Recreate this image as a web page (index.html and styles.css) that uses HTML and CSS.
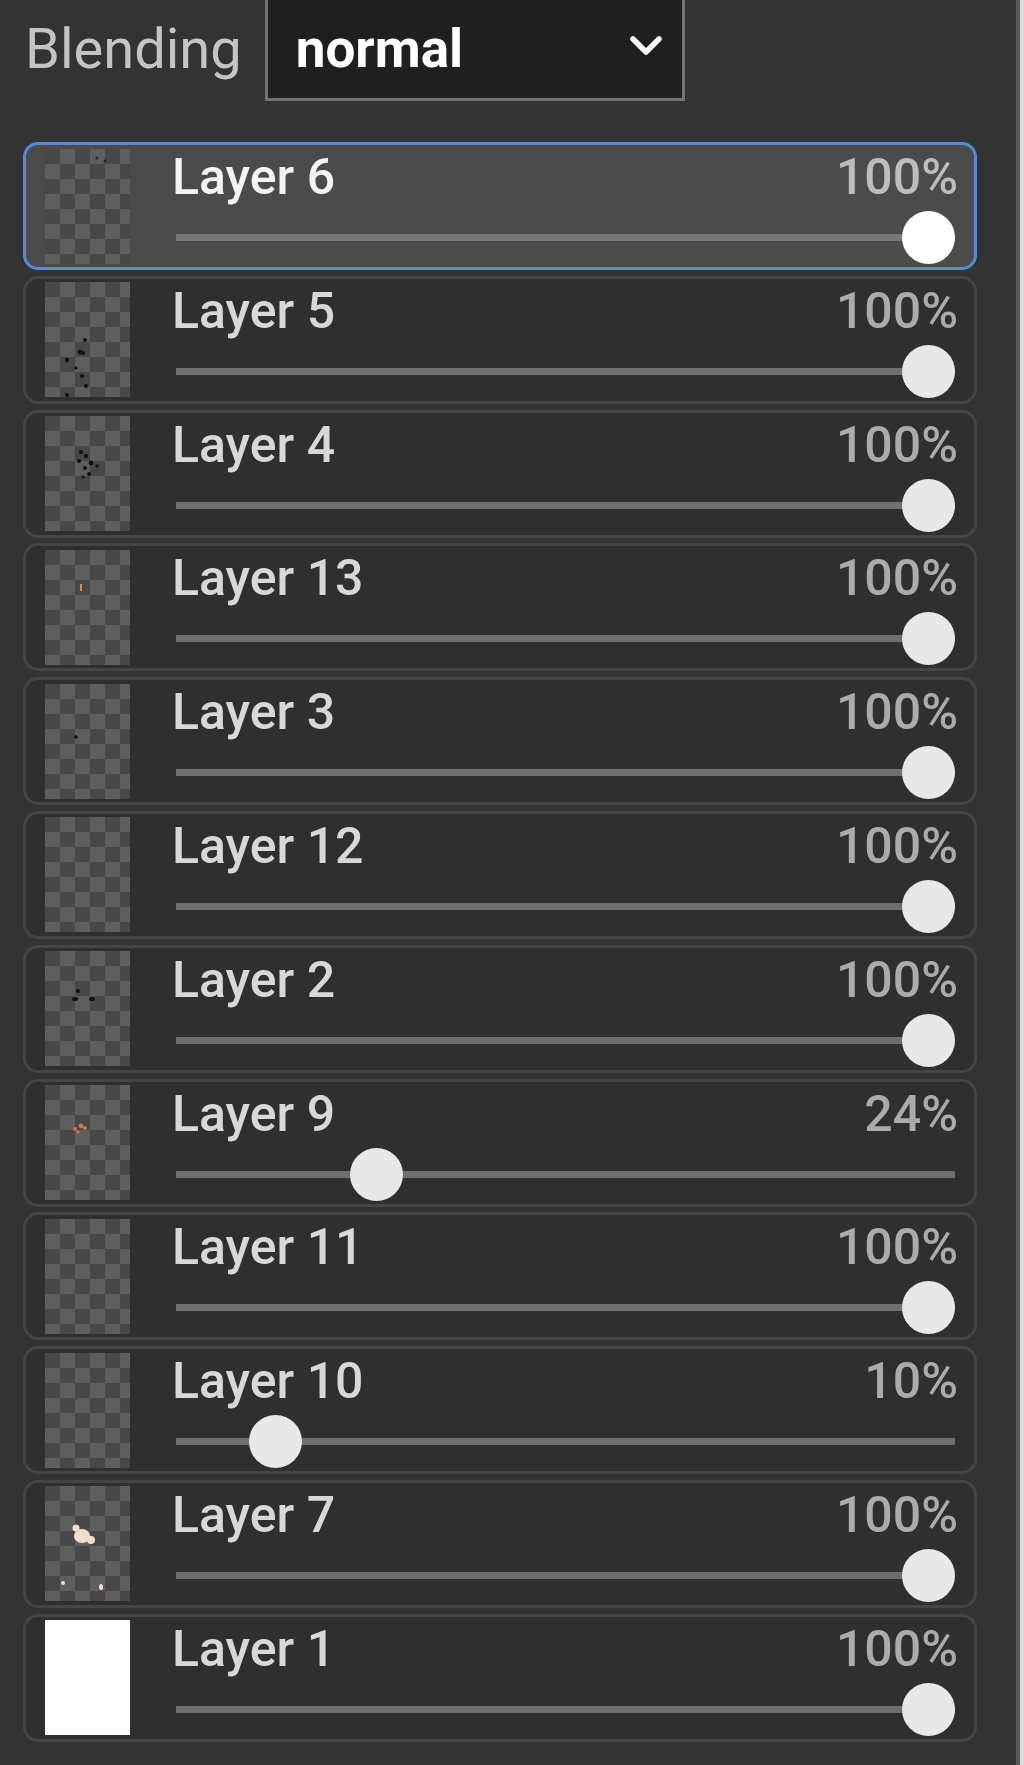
FILE: index.html
```html
<!DOCTYPE html>
<html>
<head>
<meta charset="utf-8">
<link rel="stylesheet" href="styles.css">
</head>
<body>
<div class="panel">
  <div class="header">
    <span class="label">Blending</span>
    <div class="select">
      <span class="select-value">normal</span>
      <svg class="chevron" width="36" height="24" viewBox="0 0 36 24"><polyline points="5,5 18,18 31,5" fill="none" stroke="#fff" stroke-width="5.5" stroke-linecap="round" stroke-linejoin="round"/></svg>
    </div>
  </div>
  <div class="layers">
    <div class="row row--active">
      <div class="thumb"><svg width="85" height="115" viewBox="0 0 85 115"><circle cx="52" cy="9" r="1.6" fill="#222"/><circle cx="60" cy="12" r="1.4" fill="#222"/></svg></div>
      <div class="info"><div class="line"><span class="name">Layer 6</span><span class="pct">100%</span></div><input class="slider" type="range" min="0" max="100" value="100"></div>
    </div>
    <div class="row">
      <div class="thumb"><svg width="85" height="115" viewBox="0 0 85 115"><g fill="#111"><circle cx="40" cy="58" r="2"/><circle cx="35" cy="70" r="2.4"/><circle cx="38" cy="71" r="2"/><circle cx="22" cy="78" r="2.2"/><circle cx="37" cy="94" r="2"/><circle cx="41" cy="104" r="2"/><circle cx="22" cy="113" r="2"/><circle cx="31" cy="86" r="1.4"/></g></svg></div>
      <div class="info"><div class="line"><span class="name">Layer 5</span><span class="pct">100%</span></div><input class="slider" type="range" min="0" max="100" value="100"></div>
    </div>
    <div class="row">
      <div class="thumb"><svg width="85" height="115" viewBox="0 0 85 115"><g fill="#111"><circle cx="36" cy="36" r="2"/><circle cx="41" cy="40" r="2.2"/><circle cx="34" cy="45" r="2"/><circle cx="46" cy="47" r="2.4"/><circle cx="40" cy="52" r="2"/><circle cx="52" cy="50" r="1.8"/><circle cx="44" cy="58" r="2"/><circle cx="38" cy="61" r="1.6"/></g></svg></div>
      <div class="info"><div class="line"><span class="name">Layer 4</span><span class="pct">100%</span></div><input class="slider" type="range" min="0" max="100" value="100"></div>
    </div>
    <div class="row">
      <div class="thumb"><svg width="85" height="115" viewBox="0 0 85 115"><rect x="35" y="34" width="2" height="7" fill="#d98a55"/></svg></div>
      <div class="info"><div class="line"><span class="name">Layer 13</span><span class="pct">100%</span></div><input class="slider" type="range" min="0" max="100" value="100"></div>
    </div>
    <div class="row">
      <div class="thumb"><svg width="85" height="115" viewBox="0 0 85 115"><circle cx="31" cy="53" r="1.8" fill="#111"/></svg></div>
      <div class="info"><div class="line"><span class="name">Layer 3</span><span class="pct">100%</span></div><input class="slider" type="range" min="0" max="100" value="100"></div>
    </div>
    <div class="row">
      <div class="thumb"></div>
      <div class="info"><div class="line"><span class="name">Layer 12</span><span class="pct">100%</span></div><input class="slider" type="range" min="0" max="100" value="100"></div>
    </div>
    <div class="row">
      <div class="thumb"><svg width="85" height="115" viewBox="0 0 85 115"><g fill="#111"><circle cx="33" cy="40" r="2"/><ellipse cx="30" cy="48" rx="3" ry="2"/><ellipse cx="47" cy="48" rx="3" ry="2"/></g></svg></div>
      <div class="info"><div class="line"><span class="name">Layer 2</span><span class="pct">100%</span></div><input class="slider" type="range" min="0" max="100" value="100"></div>
    </div>
    <div class="row">
      <div class="thumb"><svg width="85" height="115" viewBox="0 0 85 115"><g fill="#c97a4e"><circle cx="30" cy="44" r="2"/><circle cx="36" cy="41" r="2.4"/><circle cx="40" cy="43" r="2"/><circle cx="33" cy="47" r="1.6"/></g></svg></div>
      <div class="info"><div class="line"><span class="name">Layer 9</span><span class="pct">24%</span></div><input class="slider" type="range" min="0" max="100" value="24"></div>
    </div>
    <div class="row">
      <div class="thumb"></div>
      <div class="info"><div class="line"><span class="name">Layer 11</span><span class="pct">100%</span></div><input class="slider" type="range" min="0" max="100" value="100"></div>
    </div>
    <div class="row">
      <div class="thumb"><svg width="85" height="115" viewBox="0 0 85 115"><circle cx="31" cy="46" r="1.6" fill="#8a3a2a"/></svg></div>
      <div class="info"><div class="line"><span class="name">Layer 10</span><span class="pct">10%</span></div><input class="slider" type="range" min="0" max="100" value="10"></div>
    </div>
    <div class="row">
      <div class="thumb"><svg width="85" height="115" viewBox="0 0 85 115"><g fill="#f4ddd0"><ellipse cx="37" cy="50" rx="8" ry="7"/><circle cx="31" cy="42" r="3.5"/><circle cx="46" cy="54" r="4"/><circle cx="18" cy="97" r="2"/><ellipse cx="56" cy="101" rx="2" ry="3"/></g></svg></div>
      <div class="info"><div class="line"><span class="name">Layer 7</span><span class="pct">100%</span></div><input class="slider" type="range" min="0" max="100" value="100"></div>
    </div>
    <div class="row">
      <div class="thumb thumb--white"></div>
      <div class="info"><div class="line"><span class="name">Layer 1</span><span class="pct">100%</span></div><input class="slider" type="range" min="0" max="100" value="100"></div>
    </div>
  </div>
</div>
</body>
</html>
```
FILE: styles.css
```css
html, body {
  margin: 0;
  padding: 0;
  background: #dcdcdc;
}
body {
  font-family: Roboto, "Liberation Sans", Arial, sans-serif;
}
.panel {
  box-sizing: border-box;
  width: 1020px;
  min-height: 1765px;
  background: #333333;
  border-right: 4px solid #585858;
  padding: 0 39px 0 23px;
  display: flex;
  flex-direction: column;
  overflow: hidden;
}
.header {
  display: flex;
  align-items: center;
  gap: 23px;
  height: 104px;
  margin-top: -3px;
  padding-left: 2px;
}
.label {
  font-size: 56px;
  color: #c4c4c4;
}
.select {
  box-sizing: border-box;
  width: 420px;
  height: 104px;
  background: #1f1f1f;
  border: 3px solid #727272;
  display: flex;
  align-items: center;
  justify-content: space-between;
  padding: 0 18px 0 28px;
}
.select-value {
  font-size: 53px;
  font-weight: 700;
  color: #ffffff;
}
.chevron {
  display: block;
  margin-top: -6px;
}
.layers {
  margin-top: 41px;
  display: flex;
  flex-direction: column;
  gap: 5.8px;
}
.row {
  box-sizing: border-box;
  height: 128px;
  border: 3px solid #454545;
  border-radius: 15px;
  background: #2f2f2f;
  display: flex;
  align-items: center;
  gap: 42px;
  padding: 0 16px 0 19px;
}
.row--active {
  background: #4b4b4b;
  border-color: #5a88d6;
}
.thumb {
  flex: none;
  width: 85px;
  height: 115px;
  background: repeating-conic-gradient(#5e5e5e 0 25%, #484848 0 50%) 0 0 / 30px 30px;
}
.thumb svg {
  display: block;
}
.thumb--white {
  background: #ffffff;
}
.info {
  flex: 1;
  align-self: stretch;
  display: flex;
  flex-direction: column;
  padding-top: 7px;
}
.line {
  display: flex;
  justify-content: space-between;
  align-items: baseline;
  height: 50px;
  line-height: 50px;
}
.name {
  font-size: 50px;
  font-weight: 500;
  color: #d8d8d8;
}
.row--active .name {
  color: #f4f4f4;
}
.pct {
  font-size: 50px;
  font-weight: 500;
  color: #ababab;
}
.row--active .pct {
  color: #bdbdbd;
}
.slider {
  -webkit-appearance: none;
  appearance: none;
  display: block;
  width: auto;
  height: 53px;
  margin: 9px 3px 0 4px;
  padding: 0;
  background: transparent;
}
.slider::-webkit-slider-runnable-track {
  height: 7px;
  background: #6f6f6f;
  border: none;
}
.slider::-webkit-slider-thumb {
  -webkit-appearance: none;
  appearance: none;
  width: 53px;
  height: 53px;
  border-radius: 50%;
  background: #e8e8e8;
  border: none;
  margin-top: -23px;
}
.row--active .slider::-webkit-slider-thumb {
  background: #ffffff;
}
.row--active .slider::-webkit-slider-runnable-track {
  background: #777777;
}
```
